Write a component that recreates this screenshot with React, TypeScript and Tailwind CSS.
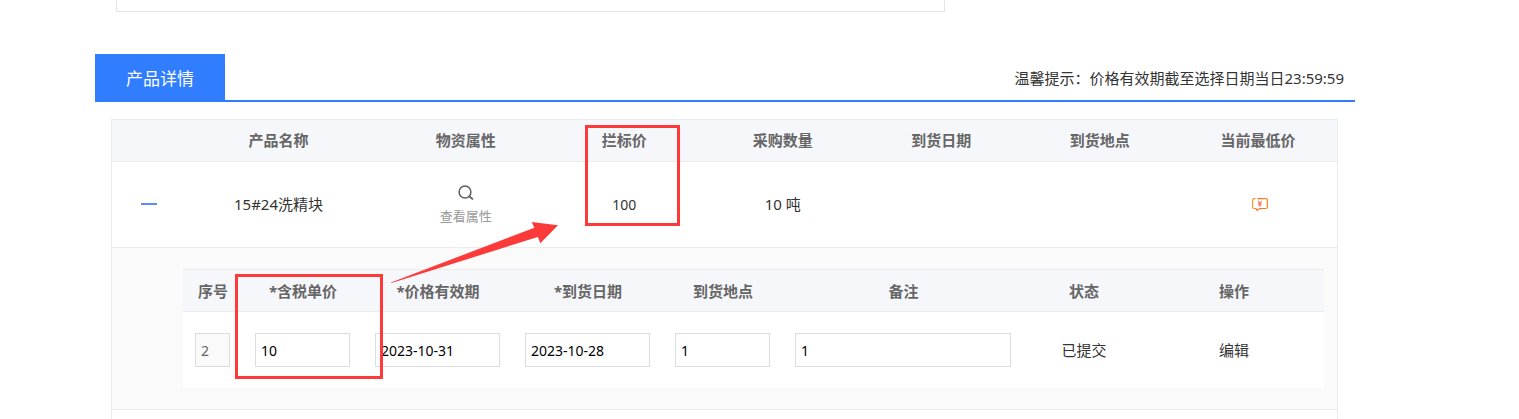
const productColumns = [
  "产品名称",
  "物资属性",
  "拦标价",
  "采购数量",
  "到货日期",
  "到货地点",
  "当前最低价",
];

const quoteColumns = [
  "序号",
  "*含税单价",
  "*价格有效期",
  "*到货日期",
  "到货地点",
  "备注",
  "状态",
  "操作",
];

const quote = {
  no: "2",
  price: "10",
  validUntil: "2023-10-31",
  arrivalDate: "2023-10-28",
  place: "1",
  remark: "1",
  status: "已提交",
};

const SearchIcon = () => (
  <svg width="16" height="16" viewBox="0 0 16 16" fill="none" stroke="#5f5f5f">
    <circle cx="7" cy="7" r="5.9" strokeWidth="1.5" />
    <path d="M11.2 11.2 15 14.4" strokeWidth="1.8" />
  </svg>
);

const LowestPriceIcon = () => (
  <svg width="16" height="13" viewBox="0 0 16 13" fill="none">
    <defs>
      <linearGradient id="bubble" x1="0" y1="0" x2="1" y2="0">
        <stop offset="0" stopColor="#ff9a1f" />
        <stop offset="0.4" stopColor="#ff6a1f" />
        <stop offset="1" stopColor="#ff8a1a" />
      </linearGradient>
    </defs>
    <path
      d="M5.4 .6H14Q15.4 .6 15.4 2V9Q15.4 10.5 14 10.5H7.8L5 12.4 4 10.5H2Q.6 10.5 .6 9V2Q.6 .6 2 .6H3.4"
      stroke="url(#bubble)"
      strokeWidth="1.2"
    />
    <path
      d="M6 2.8 7.8 5 9.6 2.8M6 5.2H9.6M6 6.9H9.6M7.8 5V8.8"
      stroke="#fb5a3c"
      strokeWidth="0.9"
    />
  </svg>
);

type FieldProps = {
  label: string;
  value: string;
  disabled?: boolean;
};

const Field = ({ label, value, disabled }: FieldProps) => (
  <td className="pl-3 pr-[13px] py-[21px]">
    <input
      type="text"
      aria-label={label}
      defaultValue={value}
      disabled={disabled}
      className="block w-full h-[34px] px-[5px] border border-[#dcdcdc] bg-white text-sm text-black disabled:bg-[#fafafa] disabled:text-[#666]"
    />
  </td>
);

const QuoteTable = () => (
  <table className="w-full table-fixed bg-white">
    <colgroup>
      <col className="w-[60px]" />
      <col className="w-[120px]" />
      <col className="w-[150px]" />
      <col className="w-[150px]" />
      <col className="w-[120px]" />
      <col />
      <col className="w-[120px]" />
      <col className="w-[180px]" />
    </colgroup>
    <thead>
      <tr className="h-[42px] border-y border-[#ececec] bg-[#f5f7fb] text-[#666]">
        {quoteColumns.map((name) => (
          <th key={name} className="pt-px font-bold whitespace-nowrap">
            {name}
          </th>
        ))}
      </tr>
    </thead>
    <tbody>
      <tr className="text-center">
        <Field label="序号" value={quote.no} disabled />
        <Field label="含税单价" value={quote.price} />
        <Field label="价格有效期" value={quote.validUntil} />
        <Field label="到货日期" value={quote.arrivalDate} />
        <Field label="到货地点" value={quote.place} />
        <Field label="备注" value={quote.remark} />
        <td>{quote.status}</td>
        <td>
          <button type="button">编辑</button>
        </td>
      </tr>
    </tbody>
  </table>
);

const ProductTable = () => (
  <table className="w-full table-fixed border border-[#ececec]">
    <colgroup>
      <col className="w-[59px]" />
      <col className="w-[216px]" />
      <col />
      <col />
      <col />
      <col />
      <col />
      <col />
    </colgroup>
    <thead>
      <tr className="h-[42px] border-b border-[#ececec] bg-[#f5f7fb] text-[#666]">
        <td></td>
        {productColumns.map((name) => (
          <th key={name} className="pb-[2px] font-bold whitespace-nowrap">
            {name}
          </th>
        ))}
      </tr>
    </thead>
    <tbody>
      <tr className="h-[86px] border-b border-[#ececec] text-center">
        <td className="pl-[15px] pb-[2px]">
          <button
            type="button"
            aria-label="收起"
            className="flex items-center justify-center w-[43px] h-6"
          >
            <span className="w-4 h-[2px] bg-[#5b8bfb]" />
          </button>
        </td>
        <td className="pb-[2px]">15#24洗精块</td>
        <td className="pt-[2px]">
          <button
            type="button"
            className="inline-flex flex-col items-center gap-[5px] align-middle text-[13px] leading-5 text-[#999]"
          >
            <SearchIcon />
            查看属性
          </button>
        </td>
        <td className="text-sm">100</td>
        <td className="pb-[2px]">10 吨</td>
        <td></td>
        <td></td>
        <td className="pb-[3px]">
          <button type="button" aria-label="当前最低价" className="pl-1 align-middle">
            <LowestPriceIcon />
          </button>
        </td>
      </tr>
      {/* Expanded quotes */}
      <tr className="border-b border-[#ececec] bg-[#fafafa]">
        <td colSpan={8} className="pt-[21px] pb-[21px] pl-[71px] pr-[13px]">
          <QuoteTable />
        </td>
      </tr>
      <tr className="h-[86px]">
        <td colSpan={8}></td>
      </tr>
    </tbody>
  </table>
);

/* Red marks drawn over the page */
const Annotations = () => (
  <div className="pointer-events-none">
    <div className="absolute left-[585px] top-[125px] w-[95px] h-[101px] border-3 border-[#fc3a3a]" />
    <div className="absolute left-[235px] top-[274px] w-[148px] h-[105px] border-3 border-[#fc3a3a]" />
    <svg
      className="absolute left-[390px] top-[220px]"
      width="170"
      height="66"
      viewBox="390 220 170 66"
    >
      <path
        d="M391 282.5 534.3 227.7 531.8 222 558 225.3 540.3 243.2 537.8 237 391.5 283Z"
        fill="#fc3a3a"
      />
    </svg>
  </div>
);

export default function App() {
  return (
    <div
      lang="zh-CN"
      className="relative h-screen overflow-hidden bg-white pl-[95px] pr-[164px] font-['Noto_Sans','Noto_Sans_CJK_SC',sans-serif] text-[15px] leading-5 text-[#333]"
    >
      {/* End of the previous panel */}
      <div className="ml-[21px] mr-[410px] h-3 border border-t-0 border-[#e4e4e4]" />

      {/* Section title */}
      <div className="mt-[42px] flex items-stretch justify-between h-12 border-b-2 border-[#307dff]">
        <h2 className="-mb-[2px] flex items-center justify-center w-[130px] pt-[2px] bg-[#307dff] text-[17px] text-white">
          产品详情
        </h2>
        <p className="self-center pr-[11px] pt-[2px]">
          温馨提示：价格有效期截至选择日期当日23:59:59
        </p>
      </div>

      <div className="mt-[17px] ml-4 mr-[17px]">
        <ProductTable />
      </div>

      <Annotations />
    </div>
  );
}
